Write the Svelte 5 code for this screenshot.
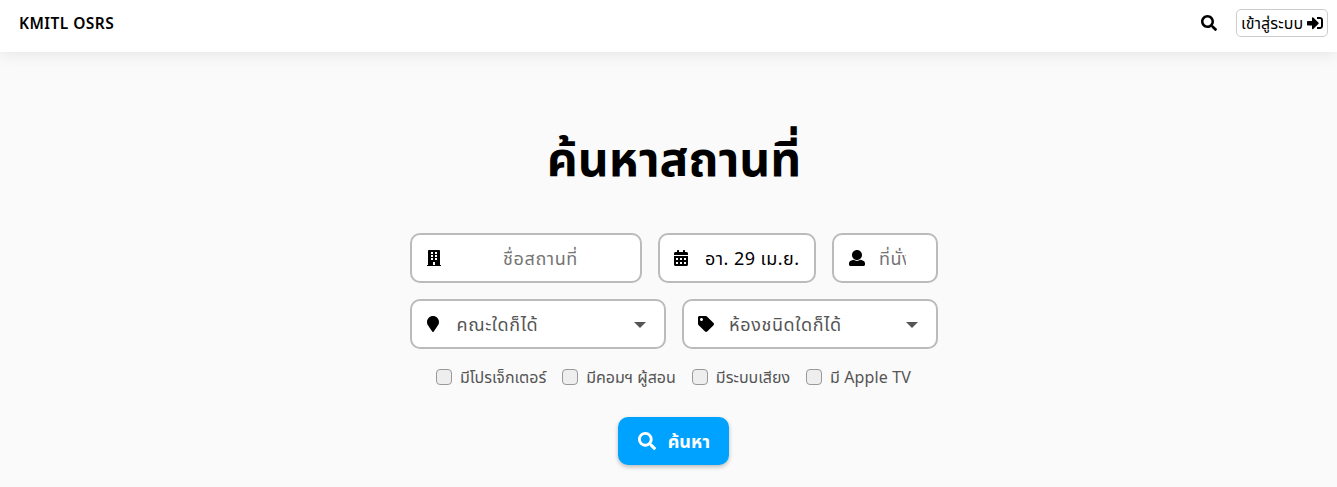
<script>
  const paths = {
    search: [512, 'M505 442.7L405.3 343c-4.5-4.5-10.6-7-17-7H372c27.6-35.3 44-79.7 44-128C416 93.1 322.9 0 208 0S0 93.1 0 208s93.1 208 208 208c48.3 0 92.7-16.4 128-44v16.3c0 6.4 2.5 12.5 7 17l99.7 99.7c9.4 9.4 24.6 9.4 33.9 0l28.3-28.3c9.4-9.4 9.4-24.6.1-34zM208 336c-70.7 0-128-57.2-128-128 0-70.7 57.2-128 128-128 70.7 0 128 57.2 128 128 0 70.7-57.2 128-128 128z'],
    signin: [512, 'M416 448h-84c-6.6 0-12-5.4-12-12v-40c0-6.6 5.4-12 12-12h84c17.7 0 32-14.3 32-32V160c0-17.7-14.3-32-32-32h-84c-6.6 0-12-5.4-12-12V76c0-6.6 5.4-12 12-12h84c53 0 96 43 96 96v192c0 53-43 96-96 96zm-47-201L201 79c-15-15-41-4.5-41 17v96H24c-13.3 0-24 10.7-24 24v96c0 13.3 10.7 24 24 24h136v96c0 21.5 26 32 41 17l168-168c9.3-9.4 9.3-24.6 0-34z'],
    building: [448, 'M436 480h-20V24c0-13.3-10.7-24-24-24H56C42.7 0 32 10.7 32 24v456H12c-6.6 0-12 5.4-12 12v20h448v-20c0-6.6-5.4-12-12-12zM128 64h64v64h-64zM256 64h64v64h-64zM128 160h64v64h-64zM256 160h64v64h-64zM128 256h64v64h-64zM256 256h64v64h-64zM192 384h64v96h-64z'],
    calendar: [448, 'M0 464c0 26.5 21.5 48 48 48h352c26.5 0 48-21.5 48-48V192H0zM64 256h64v64H64zM192 256h64v64h-64zM320 256h64v64h-64zM64 384h64v64H64zM192 384h64v64h-64zM320 384h64v64h-64zM400 64h-48V16c0-8.8-7.2-16-16-16h-32c-8.8 0-16 7.2-16 16v48H160V16c0-8.8-7.2-16-16-16h-32c-8.8 0-16 7.2-16 16v48H48C21.5 64 0 85.5 0 112v48h448v-48c0-26.5-21.5-48-48-48z'],
    user: [512, 'M256 0c88.366 0 160 71.634 160 160s-71.634 160-160 160S96 248.366 96 160 167.634 0 256 0zm183.283 333.821l-71.313-17.828c-74.923 53.89-165.738 41.864-223.94 0l-71.313 17.828C29.981 344.505 0 382.903 0 426.955V464c0 26.51 21.49 48 48 48h416c26.51 0 48-21.49 48-48v-37.045c0-44.052-29.981-82.45-72.717-93.134z'],
    marker: [384, 'M172.268 501.67C26.97 291.031 0 269.413 0 192 0 85.961 85.961 0 192 0s192 85.961 192 192c0 77.413-26.97 99.031-172.268 309.67-9.535 13.774-29.93 13.773-39.464 0z'],
    tag: [512, 'M0 252.118V48C0 21.49 21.49 0 48 0h204.118a48 48 0 0 1 33.941 14.059l211.882 211.882c18.745 18.745 18.745 49.137 0 67.882L293.823 497.941c-18.745 18.745-49.137 18.745-67.882 0L14.059 286.059A48 48 0 0 1 0 252.118zM112 64c-26.51 0-48 21.49-48 48s21.49 48 48 48 48-21.49 48-48-21.49-48-48-48z']
  };
  const options = ['มีโปรเจ็กเตอร์', 'มีคอมฯ ผู้สอน', 'มีระบบเสียง', 'มี Apple TV'];
</script>

{#snippet icon(name)}
  <svg class="icon {name}" viewBox="0 0 {paths[name][0]} 512" fill="currentColor" fill-rule="evenodd" aria-hidden="true"><path d={paths[name][1]} /></svg>
{/snippet}

<header>
  <strong class="brand">KMITL OSRS</strong>
  <nav>
    {@render icon('search')}
    <button class="login"><span>เข้าสู่ระบบ</span>{@render icon('signin')}</button>
  </nav>
</header>
<main>
  <h1>ค้นหาสถานที่</h1>
  <div class="row">
    <div class="field place">{@render icon('building')}<span class="value muted">ชื่อสถานที่</span></div>
    <div class="field date">{@render icon('calendar')}<span class="value">อา. 29 เม.ย.</span></div>
    <div class="field seats">{@render icon('user')}<span class="value muted">ที่นั่ง</span></div>
  </div>
  <div class="row">
    <div class="field select faculty">{@render icon('marker')}<span class="value">คณะใดก็ได้</span><i class="caret"></i></div>
    <div class="field select kind">{@render icon('tag')}<span class="value">ห้องชนิดใดก็ได้</span><i class="caret"></i></div>
  </div>
  <div class="options">
    {#each options as label, i}
      <div class="option o{i}"><i class="box"></i><span>{label}</span></div>
    {/each}
  </div>
  <button class="submit">{@render icon('search')}<span>ค้นหา</span></button>
</main>

<style>
  :global(body) { background: #fafafa; overflow: hidden; }
  :global(#app) { font-family: 'Noto Sans', 'Noto Sans Thai', 'Noto Sans Thai UI', sans-serif; color: #000; height: 487px; }
  header { box-sizing: border-box; height: 52px; padding: 0 9px 0 19px; background: #fff; box-shadow: 0 2px 15px rgba(0, 0, 0, .09); display: flex; align-items: center; justify-content: space-between; }
  .brand { font-size: 15.5px; line-height: 20px; margin-top: -7px; font-weight: 600; letter-spacing: .45px; white-space: nowrap; }
  nav { display: flex; align-items: center; gap: 19px; margin-top: -6px; }
  button { font-family: inherit; margin: 0; color: inherit; }
  .icon { display: block; height: 16px; flex: none; }
  .login { box-sizing: border-box; width: 92px; height: 28px; padding: 0 4px; border: 1px solid #ccc; border-radius: 5px; background: #fff; display: flex; align-items: center; justify-content: space-between; font-size: 16px; line-height: 24px; white-space: nowrap; }
  .login span { letter-spacing: .1px; }
  main { display: flex; flex-direction: column; align-items: center; width: 528px; margin-left: 410px; }
  h1 { font-size: 48px; line-height: 72px; height: 72px; margin: 70px 0 39px; font-weight: 700; white-space: nowrap; }
  .row { display: flex; gap: 16px; width: 528px; margin-bottom: 16px; }
  .field { box-sizing: border-box; height: 50px; border: 2px solid #bbb; border-radius: 10px; background: #fff; display: flex; align-items: center; padding: 0 14px; font-size: 18px; line-height: 28px; letter-spacing: .45px; white-space: nowrap; }
  .value { overflow: hidden; padding: 6px 0; }
  .muted { color: #757575; }
  .place { width: 232px; padding-left: 15px; }
  .place .value { flex: 1; text-align: center; margin-left: 14px; letter-spacing: .6px; }
  .date { width: 158px; }
  .date .value { margin-left: 17px; }
  .seats { width: 106px; padding-left: 15px; }
  .seats .value { margin-left: 14px; width: 27px; }
  .select { width: 256px; color: #555; padding-right: 18px; letter-spacing: .62px; }
  .faculty { padding-left: 14.5px; }
  .select .icon { color: #000; }
  .select .value { margin-left: 18px; }
  .kind .value { margin-left: 15px; }
  .caret { margin-left: auto; margin-top: 1px; border: 6px solid transparent; border-top-color: #555; border-bottom: 0; }
  .options { display: flex; gap: 16px; height: 24px; margin-right: 1px; font-size: 16px; line-height: 24px; color: #555; white-space: nowrap; }
  .option { display: flex; align-items: center; gap: 8px; }
  .o3 { letter-spacing: .12px; }
  .box { box-sizing: border-box; width: 16px; height: 16px; border: 1px solid #999; border-radius: 4px; background: #eee; }
  .submit { box-sizing: border-box; width: 111px; height: 48px; margin: 28px 1px 0 0; padding: 0 19px 0 20px; border: 0; border-radius: 10px; color: #fff; background: #00a2ff; box-shadow: 0 2px 4px rgba(0, 0, 0, .25); display: flex; align-items: center; justify-content: space-between; font-size: 18px; line-height: 28px; font-weight: 700; white-space: nowrap; }
  .submit .icon { height: 18px; }
</style>
